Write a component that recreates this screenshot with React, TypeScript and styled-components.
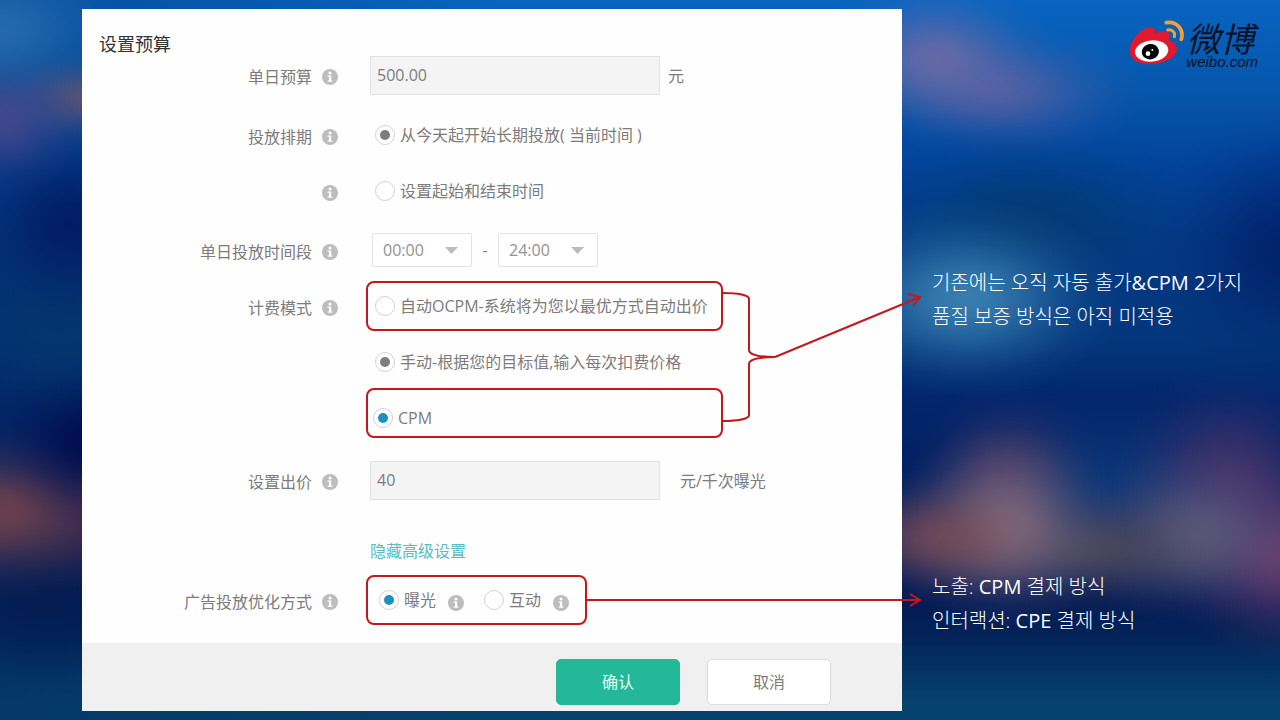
import React, { useState } from 'react';
import styled, { createGlobalStyle } from 'styled-components';

const RED = '#c4181c';
const latin = '"Open Sans", "Noto Sans CJK SC", sans-serif';

/* A soft light: an ellipse that fades out in eased steps. */
const glow = (rx: number, ry: number, x: number, y: number, rgb: string, alpha: number) => {
  const stops = [
    [1, 0],
    [0.9, 18],
    [0.66, 36],
    [0.36, 56],
    [0.12, 78],
    [0, 100],
  ].map(([k, at]) => `rgba(${rgb}, ${(alpha * k).toFixed(3)}) ${at}%`);
  return `radial-gradient(ellipse ${rx}px ${ry}px at ${x}px ${y}px, ${stops.join(', ')})`;
};

const backdrop = [
  glow(130, 80, 0, 30, '44, 112, 176', 0.8),
  glow(100, 80, 0, 118, '88, 72, 140', 0.75),
  glow(80, 50, 82, 97, '100, 84, 112', 0.8),
  glow(110, 110, 70, 225, '2, 26, 100', 0.9),
  glow(110, 110, 60, 325, '4, 54, 108', 0.8),
  glow(110, 90, 95, 440, '2, 10, 76', 0.9),
  glow(140, 90, 0, 512, '124, 68, 74', 0.85),
  glow(100, 80, 90, 520, '60, 36, 76', 0.7),
  glow(100, 90, 50, 590, '4, 28, 80', 0.8),
  glow(120, 80, 935, 58, '120, 108, 164', 0.8),
  glow(140, 70, 1005, 92, '104, 98, 160', 0.7),
  glow(160, 100, 965, 298, '64, 138, 184', 0.85),
  glow(180, 90, 1030, 215, '3, 58, 110', 0.75),
  glow(140, 140, 1290, 250, '2, 30, 104', 0.85),
  glow(130, 70, 940, 538, '124, 76, 84', 0.8),
  glow(120, 100, 1005, 528, '140, 116, 134', 0.85),
  glow(100, 90, 1008, 474, '88, 62, 98', 0.7),
  glow(160, 70, 1100, 550, '80, 74, 88', 0.8),
  glow(130, 90, 1195, 536, '100, 96, 130', 0.85),
  glow(120, 110, 1230, 475, '84, 54, 106', 0.75),
  glow(120, 110, 1285, 555, '112, 60, 108', 0.9),
  glow(180, 100, 1110, 480, '12, 58, 124', 0.8),
].join(',\n');

const GlobalStyle = createGlobalStyle`
  *, *::before, *::after { box-sizing: border-box; }
  body {
    margin: 0;
    font-family: ${latin};
    font-size: 16px;
    line-height: 24px;
    color: #7c7c7c;
  }
  button, input, select { font: inherit; color: inherit; }
`;

const Slide = styled.div`
  min-height: 100vh;
  padding: 9px 0 9px 82px;
  display: grid;
  grid-template-columns: minmax(600px, 820px) minmax(340px, 1fr);
  align-items: start;
  overflow: hidden;
  background:
    ${backdrop},
    linear-gradient(90deg, rgba(2, 40, 96, 0.35), rgba(2, 40, 96, 0) 40%),
    linear-gradient(
      180deg,
      #0864c0 0,
      #0656ac 90px,
      #02429a 170px,
      #033a84 240px,
      #03367c 340px,
      #02256c 400px,
      #022062 480px,
      #021a56 600px,
      #032458 640px,
      #05426e 700px
    );
`;

const Panel = styled.form`
  position: relative;
  background: #fefefe;
  padding-top: 23px;
`;

const Title = styled.h1`
  margin: 0 0 0 17px;
  font-size: 18px;
  line-height: 24px;
  font-weight: 400;
  color: #333;
`;

const Row = styled.div<{ $space?: number; $height?: number }>`
  display: grid;
  grid-template-columns: 256px minmax(0, 1fr);
  column-gap: 28px;
  align-items: center;
  min-height: ${(p) => p.$height ?? 40}px;
  margin-top: ${(p) => p.$space ?? 0}px;
`;

const LabelCell = styled.div`
  display: flex;
  justify-content: flex-end;
  align-items: center;
  gap: 10px;
  padding-top: 3px;
`;

const Controls = styled.div<{ $inset?: number }>`
  display: flex;
  align-items: center;
  padding-left: ${(p) => p.$inset ?? 9}px;
`;

const Highlight = styled.div<{ $width: number; $inset?: number; $drop?: number }>`
  position: relative;
  display: flex;
  align-items: center;
  width: ${(p) => p.$width}px;
  height: 50px;
  border: 2px solid ${RED};
  border-radius: 8px;
  padding-left: ${(p) => p.$inset ?? 7}px;
  padding-top: ${(p) => p.$drop ?? 0}px;
`;

const Choice = styled.label`
  display: inline-flex;
  align-items: center;
  gap: 5px;
  white-space: nowrap;
`;

const Radio = styled.input<{ $accent?: string }>`
  appearance: none;
  flex: none;
  width: 20px;
  height: 20px;
  margin: 0;
  border: 1px solid #d2d2d2;
  border-radius: 50%;
  background: #fff;
  display: grid;
  place-items: center;
  &:checked::before {
    content: '';
    width: 10px;
    height: 10px;
    border-radius: 50%;
    background: ${(p) => p.$accent ?? '#7d7d7d'};
  }
`;

const TextField = styled.input`
  width: 290px;
  height: 39px;
  padding: 0 6px 2px;
  border: 1px solid #e2e2e2;
  background: #f4f4f4;
  border-radius: 0;
`;

const Unit = styled.span<{ $gap: number }>`
  margin-left: ${(p) => p.$gap}px;
`;

const SelectBox = styled.div`
  position: relative;
  width: 100px;
  height: 34px;
`;

const Select = styled.select`
  appearance: none;
  width: 100%;
  height: 100%;
  padding: 0 10px;
  border: 1px solid #e2e2e2;
  border-radius: 2px;
  background: #fff;
  color: #929292;
`;

const Caret = styled.svg`
  position: absolute;
  right: 14px;
  top: 14px;
  pointer-events: none;
`;

const Dash = styled.span`
  width: 26px;
  text-align: center;
`;

const InfoIcon = styled.svg`
  flex: none;
  width: 16px;
  height: 16px;
`;

const InlineInfo = styled.span`
  display: inline-flex;
  padding-top: 6px;
  margin: 0 20px 0 12px;
`;

const AdvancedLink = styled.a`
  color: #58bcc0;
  line-height: 22px;
  text-decoration: none;
`;

const Footer = styled.footer`
  display: flex;
  justify-content: flex-end;
  gap: 27px;
  height: 68px;
  margin-top: 18px;
  padding: 16px 71px 0 0;
  background: #f0f0f0;
`;

const Button = styled.button<{ $primary?: boolean }>`
  width: 124px;
  height: 46px;
  border-radius: 5px;
  border: 1px solid ${(p) => (p.$primary ? '#2bb594' : '#dcdcdc')};
  background: ${(p) => (p.$primary ? '#23b998' : '#fff')};
  color: ${(p) => (p.$primary ? '#e8fff8' : '#7c7c7c')};
`;

const Connector = styled.svg`
  position: absolute;
  left: 100%;
  overflow: visible;
  pointer-events: none;
  z-index: 1;
  fill: none;
  stroke: ${RED};
  stroke-width: 2;
`;

const BraceConnector = styled(Connector)`
  top: 6px;
`;

const ArrowConnector = styled(Connector)`
  top: 15px;
`;

const Notes = styled.aside`
  padding: 11px 22px 0 30px;
  font-family: "Open Sans", "Noto Sans CJK KR", sans-serif;
  font-weight: 300;
  font-size: 20px;
  line-height: 34px;
  color: #fff;
`;

const Latin = styled.span`
  font-weight: 400;
`;

const Brand = styled.div`
  display: flex;
  justify-content: flex-end;
  height: 50px;
  color: #071226;
`;

const BrandText = styled.div`
  display: flex;
  flex-direction: column;
  padding-top: 2px;
  font-style: italic;
  white-space: nowrap;
`;

const BrandName = styled.span`
  font-family: "Noto Sans CJK SC", sans-serif;
  font-weight: 400;
  font-size: 34px;
  line-height: 32px;
`;

const BrandDomain = styled.span`
  font-family: "Liberation Sans", sans-serif;
  font-weight: 400;
  font-size: 15px;
  line-height: 15px;
`;

const Note = styled.p<{ $space: number }>`
  margin: ${(p) => p.$space}px 0 0;
`;

const Line = styled.span`
  display: block;
  white-space: nowrap;
`;

function Info() {
  return (
    <InfoIcon viewBox="0 0 16 16" aria-hidden="true">
      <circle cx="8" cy="8" r="8" fill="#bdbdbd" />
      <circle cx="8" cy="4" r="1.5" fill="#fff" />
      <path d="M5.500 6.500h3.700v5H10.300v1.300H5.700v-1.300H7V7.800H5.500z" fill="#fff" />
    </InfoIcon>
  );
}

function FieldLabel({ text, htmlFor }: { text?: string; htmlFor?: string }) {
  return (
    <LabelCell>
      {text && (htmlFor ? <label htmlFor={htmlFor}>{text}</label> : <span>{text}</span>)}
      <Info />
    </LabelCell>
  );
}

function TimeSelect({ id, label, value }: { id: string; label: string; value: string }) {
  return (
    <SelectBox>
      <Select id={id} aria-label={label} defaultValue={value}>
        <option>00:00</option>
        <option>12:00</option>
        <option>24:00</option>
      </Select>
      <Caret width="13" height="7" viewBox="0 0 13 7" aria-hidden="true">
        <path d="M0 0h13L6.500 7z" fill="#bcbcbc" />
      </Caret>
    </SelectBox>
  );
}

function WeiboMark() {
  return (
    <svg width="57" height="47" viewBox="60 60 171 141" aria-hidden="true">
      <path
        d="M62 152C63 122 92 88 121 82C137 79 142 90 137 101C155 91 178 91 182 103C184 111 180 117 181 122C198 126 208 140 202 156C192 181 152 192 121 192C88 192 61 178 62 152Z"
        fill="#e01830"
      />
      <ellipse cx="128" cy="153" rx="50" ry="32" fill="#fff" transform="rotate(-6 128 153)" />
      <ellipse cx="124" cy="155" rx="26" ry="23" fill="#060606" transform="rotate(-10 124 155)" />
      <circle cx="117" cy="161" r="7" fill="#fff" />
      <circle cx="130" cy="150" r="3" fill="#fff" />
      <g fill="none" stroke="#f0a040" strokeLinecap="round">
        <path d="M172 68C202 62 226 88 217 118" strokeWidth="11" />
        <path d="M176 90C190 87 200 98 196 110" strokeWidth="9" />
      </g>
    </svg>
  );
}

export default function App() {
  const [schedule, setSchedule] = useState('now');
  const [billing, setBilling] = useState('manual');
  const [goal, setGoal] = useState('exposure');

  return (
    <>
      <GlobalStyle />
      <Slide>
        <Panel onSubmit={(e) => e.preventDefault()}>
          <Title>设置预算</Title>

          <Row $height={39}>
            <FieldLabel text="单日预算" htmlFor="budget" />
            <Controls $inset={4}>
              <TextField id="budget" defaultValue="500.00" />
              <Unit $gap={8}>元</Unit>
            </Controls>
          </Row>

          <Row $space={20}>
            <FieldLabel text="投放排期" />
            <Controls>
              <Choice>
                <Radio type="radio" name="schedule" checked={schedule === 'now'} onChange={() => setSchedule('now')} />
                从今天起开始长期投放( 当前时间 )
              </Choice>
            </Controls>
          </Row>

          <Row $space={16}>
            <FieldLabel />
            <Controls>
              <Choice>
                <Radio type="radio" name="schedule" checked={schedule === 'range'} onChange={() => setSchedule('range')} />
                设置起始和结束时间
              </Choice>
            </Controls>
          </Row>

          <Row $space={20} $height={38}>
            <FieldLabel text="单日投放时间段" htmlFor="from" />
            <Controls $inset={6}>
              <TimeSelect id="from" label="开始时间" value="00:00" />
              <Dash>-</Dash>
              <TimeSelect id="to" label="结束时间" value="24:00" />
            </Controls>
          </Row>

          <Row $space={12} $height={50}>
            <FieldLabel text="计费模式" />
            <Highlight $width={357}>
              <Choice>
                <Radio type="radio" name="billing" checked={billing === 'auto'} onChange={() => setBilling('auto')} />
                自动OCPM-系统将为您以最优方式自动出价
              </Choice>
              <BraceConnector width="200" height="132" viewBox="0 0 200 132" aria-hidden="true">
                <path d="M2 4C16 4 28 6 28 10V61C28 66 40 68 54 68C40 68 28 70 28 75V126C28 130 16 132 2 132" />
                <path d="M54 68L199 8M187 5L199 8L192 17" />
              </BraceConnector>
            </Highlight>
          </Row>

          <Row $space={12} $height={38}>
            <span />
            <Controls>
              <Choice>
                <Radio type="radio" name="billing" checked={billing === 'manual'} onChange={() => setBilling('manual')} />
                手动-根据您的目标值,输入每次扣费价格
              </Choice>
            </Controls>
          </Row>

          <Row $space={7} $height={50}>
            <span />
            <Highlight $width={357} $inset={5} $drop={10}>
              <Choice>
                <Radio $accent="#1a92bc" type="radio" name="price" defaultChecked />
                CPM
              </Choice>
            </Highlight>
          </Row>

          <Row $space={23} $height={39}>
            <FieldLabel text="设置出价" htmlFor="bid" />
            <Controls $inset={4}>
              <TextField id="bid" defaultValue="40" />
              <Unit $gap={20}>元/千次曝光</Unit>
            </Controls>
          </Row>

          <Row $space={40} $height={22}>
            <span />
            <Controls $inset={4}>
              <AdvancedLink href="#advanced">隐藏高级设置</AdvancedLink>
            </Controls>
          </Row>

          <Row $space={13} $height={50}>
            <FieldLabel text="广告投放优化方式" />
            <Highlight $width={221} $inset={11}>
              <Choice>
                <Radio $accent="#1a92bc" type="radio" name="goal" checked={goal === 'exposure'} onChange={() => setGoal('exposure')} />
                曝光
              </Choice>
              <InlineInfo>
                <Info />
              </InlineInfo>
              <Choice>
                <Radio $accent="#1a92bc" type="radio" name="goal" checked={goal === 'engage'} onChange={() => setGoal('engage')} />
                互动
              </Choice>
              <InlineInfo>
                <Info />
              </InlineInfo>
              <ArrowConnector width="336" height="16" viewBox="0 0 336 16" aria-hidden="true">
                <path d="M0 8H335M325 2L335 8L325 14" />
              </ArrowConnector>
            </Highlight>
          </Row>

          <Footer>
            <Button type="submit" $primary>确认</Button>
            <Button type="button">取消</Button>
          </Footer>
        </Panel>

        <Notes>
          <Brand>
            <WeiboMark />
            <BrandText>
              <BrandName>微博</BrandName>
              <BrandDomain>weibo.com</BrandDomain>
            </BrandText>
          </Brand>
          <Note $space={196}>
            <Line>
              기존에는 오직 자동 출가<Latin>&amp;CPM 2</Latin>가지
            </Line>
            <Line>품질 보증 방식은 아직 미적용</Line>
          </Note>
          <Note $space={236}>
            <Line>
              노출: <Latin>CPM</Latin> 결제 방식
            </Line>
            <Line>
              인터랙션: <Latin>CPE</Latin> 결제 방식
            </Line>
          </Note>
        </Notes>
      </Slide>
    </>
  );
}
